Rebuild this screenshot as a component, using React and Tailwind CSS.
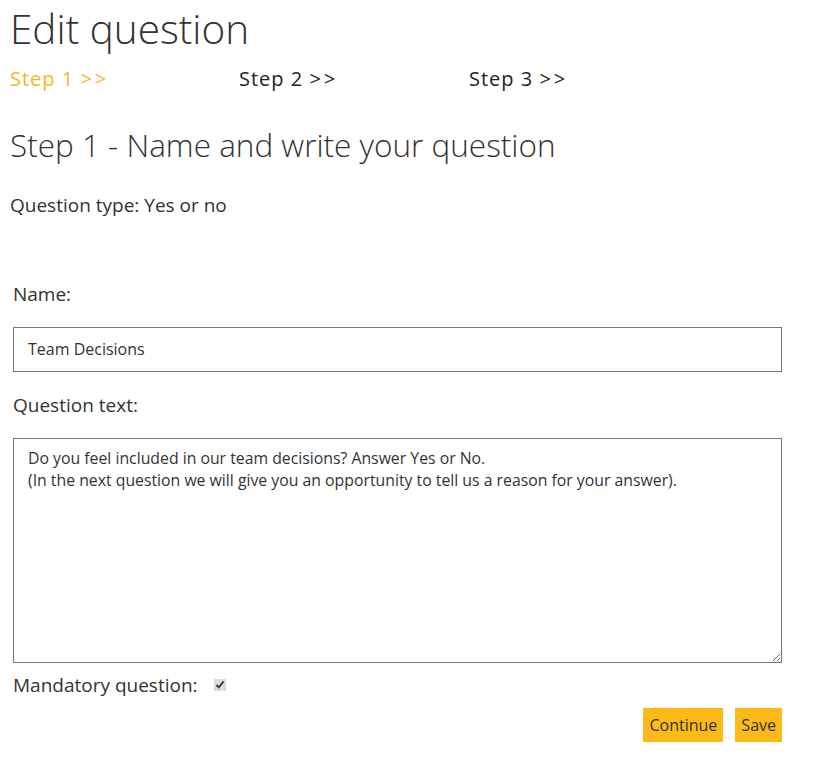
export default function App() {
  return (
    <div className="min-h-screen bg-white text-[#333] font-['Open_Sans',sans-serif]">
      <div className="w-[792px] pl-[10px]">
        <h1 className="text-[40.5px] font-light leading-none pt-[9px] text-[#333]">Edit question</h1>

        <div className="flex mt-[17px] text-[20px] leading-[24px] tracking-[1px]">
          <span className="w-[229px] text-[#f9b51c]">Step 1 <span className="tracking-[3px]">&gt;&gt;</span></span>
          <span className="w-[230px] text-[#222]">Step 2 <span className="tracking-[3px]">&gt;&gt;</span></span>
          <span className="text-[#222]">Step 3 <span className="tracking-[3px]">&gt;&gt;</span></span>
        </div>

        <h2 className="text-[31.5px] font-light leading-[40px] mt-[34px]">Step 1 - Name and write your question</h2>

        <p className="text-[19px] leading-[24px] mt-[28px]">Question type: Yes or no</p>

        <form className="pl-[3px] mt-[65px]">
          <label className="block text-[19px] leading-[24px]">Name:</label>
          <input
            className="mt-[21px] block w-[769px] h-[45px] border border-[#777] px-[14px] text-[16px] text-[#333] outline-none font-['Open_Sans',sans-serif]"
            defaultValue="Team Decisions"
          />
          <label className="block text-[19px] leading-[24px] mt-[21px]">Question text:</label>
          <textarea
            className="mt-[21px] block w-[769px] h-[225px] border border-[#777] px-[14px] py-[8px] text-[15.8px] leading-[22px] text-[#333] outline-none font-['Open_Sans',sans-serif]"
            defaultValue={"Do you feel included in our team decisions? Answer Yes or No.\n(In the next question we will give you an opportunity to tell us a reason for your answer)."}
          />
          <div className="flex items-center mt-[10px] text-[19px] leading-[24px]">
            <span>Mandatory question:</span>
            <input type="checkbox" defaultChecked className="ml-[16px] w-[12px] h-[12px] accent-[#dcdcdc]" />
          </div>
          <div className="flex justify-end gap-[12px] w-[769px] mt-[11px]">
            <button type="button" className="bg-[#fbba16] text-[#333] text-[16px] h-[34px] px-[6px]">Continue</button>
            <button type="button" className="bg-[#fbba16] text-[#333] text-[16px] h-[34px] px-[6px]">Save</button>
          </div>
        </form>
      </div>
    </div>
  );
}
